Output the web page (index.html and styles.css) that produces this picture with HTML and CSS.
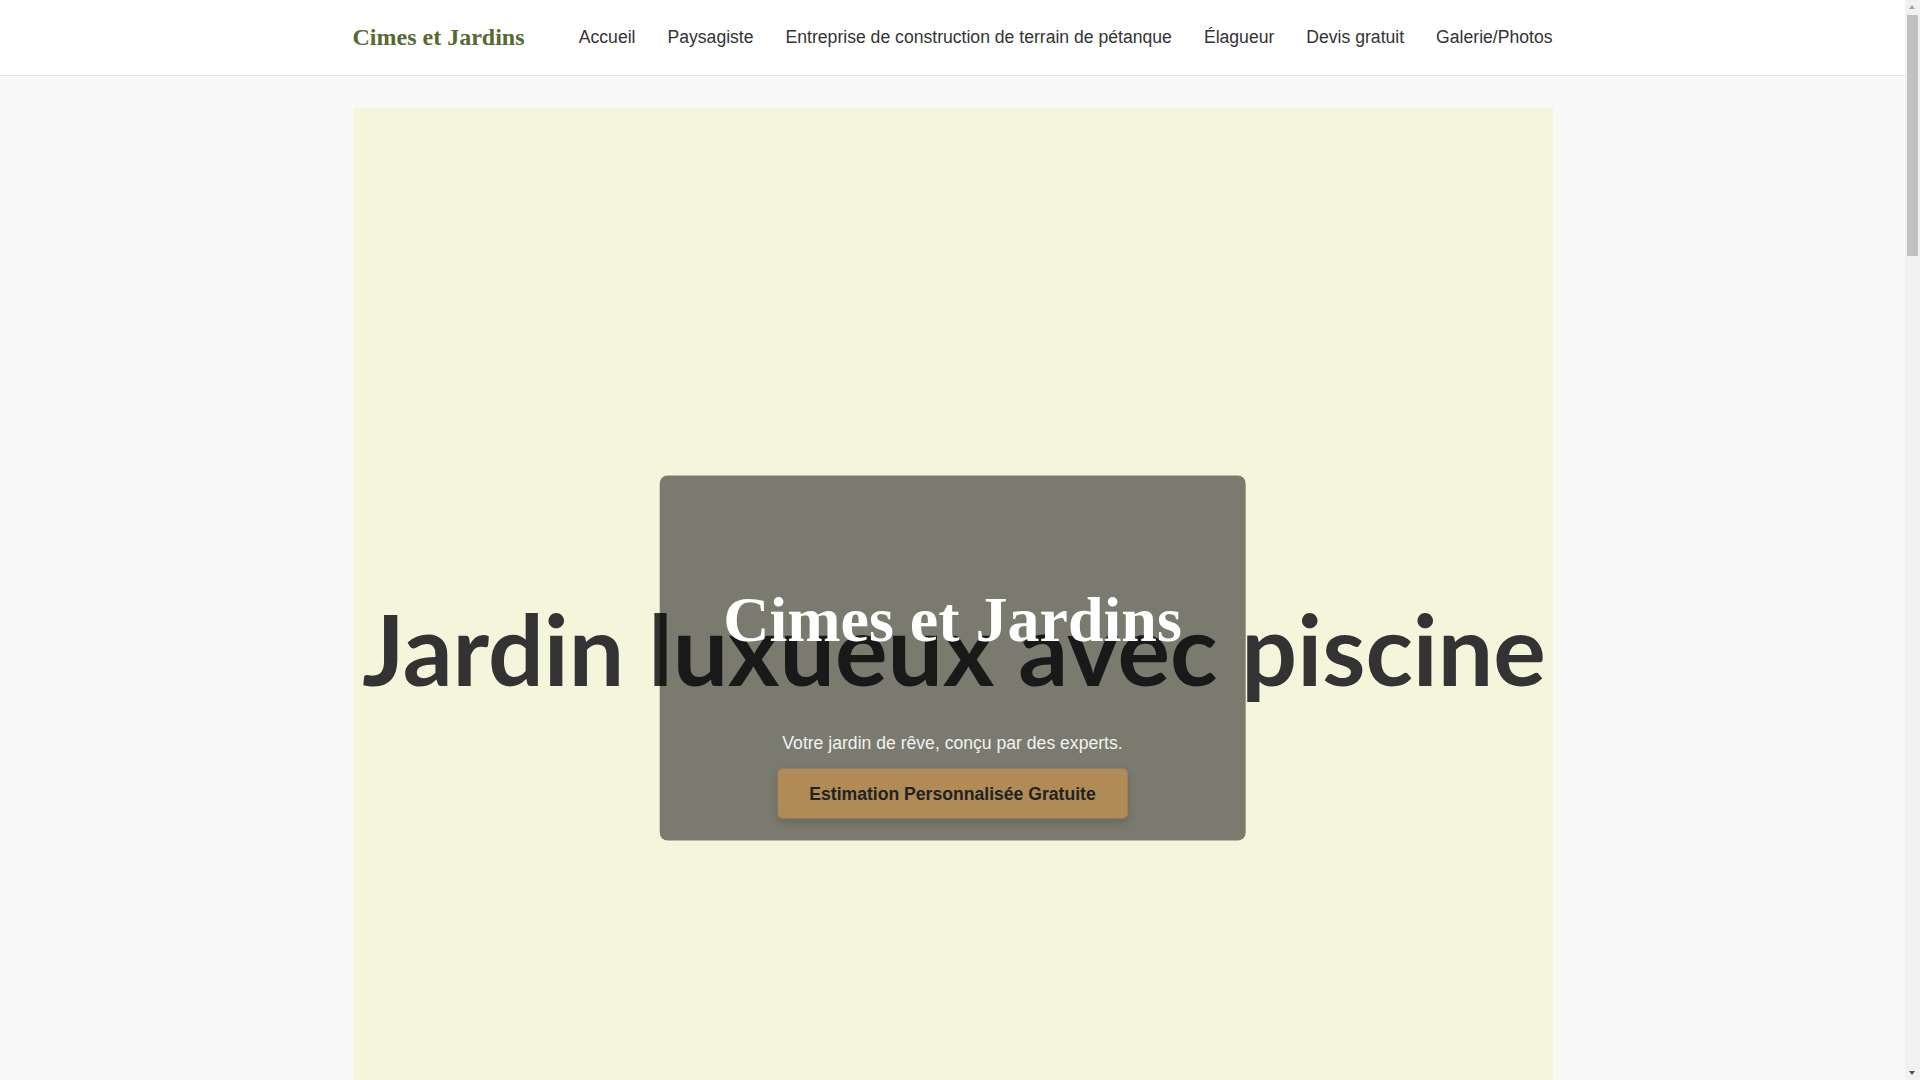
FILE: index.html
```html
<!DOCTYPE html>
<html lang="fr">
<head>
<meta charset="utf-8">
<title>Cimes et Jardins</title>
<link rel="stylesheet" href="styles.css">
</head>
<body>
<header class="site-header">
  <div class="container header-inner">
    <a class="logo" href="#">Cimes et Jardins</a>
    <nav class="nav">
      <a href="#">Accueil</a>
      <a href="#">Paysagiste</a>
      <a href="#">Entreprise de construction de terrain de pétanque</a>
      <a href="#">Élagueur</a>
      <a href="#">Devis gratuit</a>
      <a href="#">Galerie/Photos</a>
    </nav>
  </div>
</header>
<main class="container main">
  <section class="hero">
    <div class="hero-image"><span class="hero-alt">Jardin luxueux avec piscine</span></div>
    <div class="hero-card">
      <h1 class="hero-title">Cimes et Jardins</h1>
      <p class="hero-text">Votre jardin de rêve, conçu par des experts.</p>
      <a class="hero-btn" href="#">Estimation Personnalisée Gratuite</a>
    </div>
  </section>
  <section class="below"></section>
</main>
<div class="scrollbar" aria-hidden="true">
  <span class="sb-arrow sb-up"></span>
  <span class="sb-track"><span class="sb-thumb"></span></span>
  <span class="sb-arrow sb-down"></span>
</div>
</body>
</html>
```
FILE: styles.css
```css
html, body {
  margin: 0;
  padding: 0;
}
html {
  scrollbar-width: none;
}
body {
  background: #f9f9f9;
  font-family: "Liberation Sans", Arial, sans-serif;
  color: #333;
  margin-right: 15px;
}
.container {
  width: 1200px;
  margin: 0 auto;
}
.site-header {
  background: #fff;
  border-bottom: 1px solid #e6e6e6;
}
.header-inner {
  height: 75px;
  display: flex;
  align-items: center;
  justify-content: space-between;
}
.logo {
  font-family: "Liberation Serif", "Times New Roman", serif;
  font-weight: bold;
  font-size: 24px;
  color: #556b2f;
  text-decoration: none;
}
.nav {
  display: flex;
  gap: 32px;
}
.nav a {
  font-size: 17.6px;
  color: #333;
  text-decoration: none;
}
.main {
  padding-top: 32px;
}
.hero {
  position: relative;
  height: 1099px;
  background: #f5f5dc;
}
.hero-image {
  height: 100%;
  display: flex;
  align-items: center;
  justify-content: center;
}
.hero-alt {
  font-family: Lato, sans-serif;
  font-weight: bold;
  font-size: 98.4px;
  color: #333;
  white-space: nowrap;
  margin-bottom: 20px;
  margin-left: 3px;
}
.hero-card {
  position: absolute;
  top: 50%;
  left: 50%;
  transform: translate(-50%, -50%);
  width: max-content;
  padding: 22px 64px;
  background: rgba(0, 0, 0, 0.5);
  border-radius: 8px;
  text-align: center;
  display: flex;
  flex-direction: column;
  align-items: center;
}
.hero-title {
  font-family: "Liberation Serif", "Times New Roman", serif;
  font-weight: bold;
  font-size: 64px;
  line-height: 71px;
  color: #fff;
  margin: 86px 0 0;
}
.hero-text {
  font-size: 17.6px;
  line-height: 20px;
  color: #f2f2f2;
  margin: 78px 0 16px;
}
.hero-btn {
  display: inline-block;
  background: #b08b56;
  color: #222;
  font-weight: bold;
  font-size: 17.6px;
  line-height: 20px;
  padding: 15px 32px;
  border-radius: 5px;
  text-decoration: none;
  box-shadow: 0 4px 8px rgba(0, 0, 0, 0.15);
}
.below {
  height: 3493px;
}
.scrollbar {
  position: fixed;
  top: 0;
  right: 0;
  width: 15px;
  height: 100vh;
  background: #f1f1f1;
  display: flex;
  flex-direction: column;
}
.sb-arrow {
  height: 15px;
  flex: none;
  position: relative;
}
.sb-arrow::after {
  content: "";
  position: absolute;
  left: 4px;
  width: 0;
  height: 0;
  border-left: 3.5px solid transparent;
  border-right: 3.5px solid transparent;
}
.sb-up::after {
  top: 5px;
  border-bottom: 4px solid #a3a3a3;
}
.sb-down::after {
  top: 6px;
  border-top: 4px solid #505050;
}
.sb-track {
  flex: 1;
  padding: 0 2px;
}
.sb-thumb {
  display: block;
  height: 241px;
  background: #c1c1c1;
}
```
